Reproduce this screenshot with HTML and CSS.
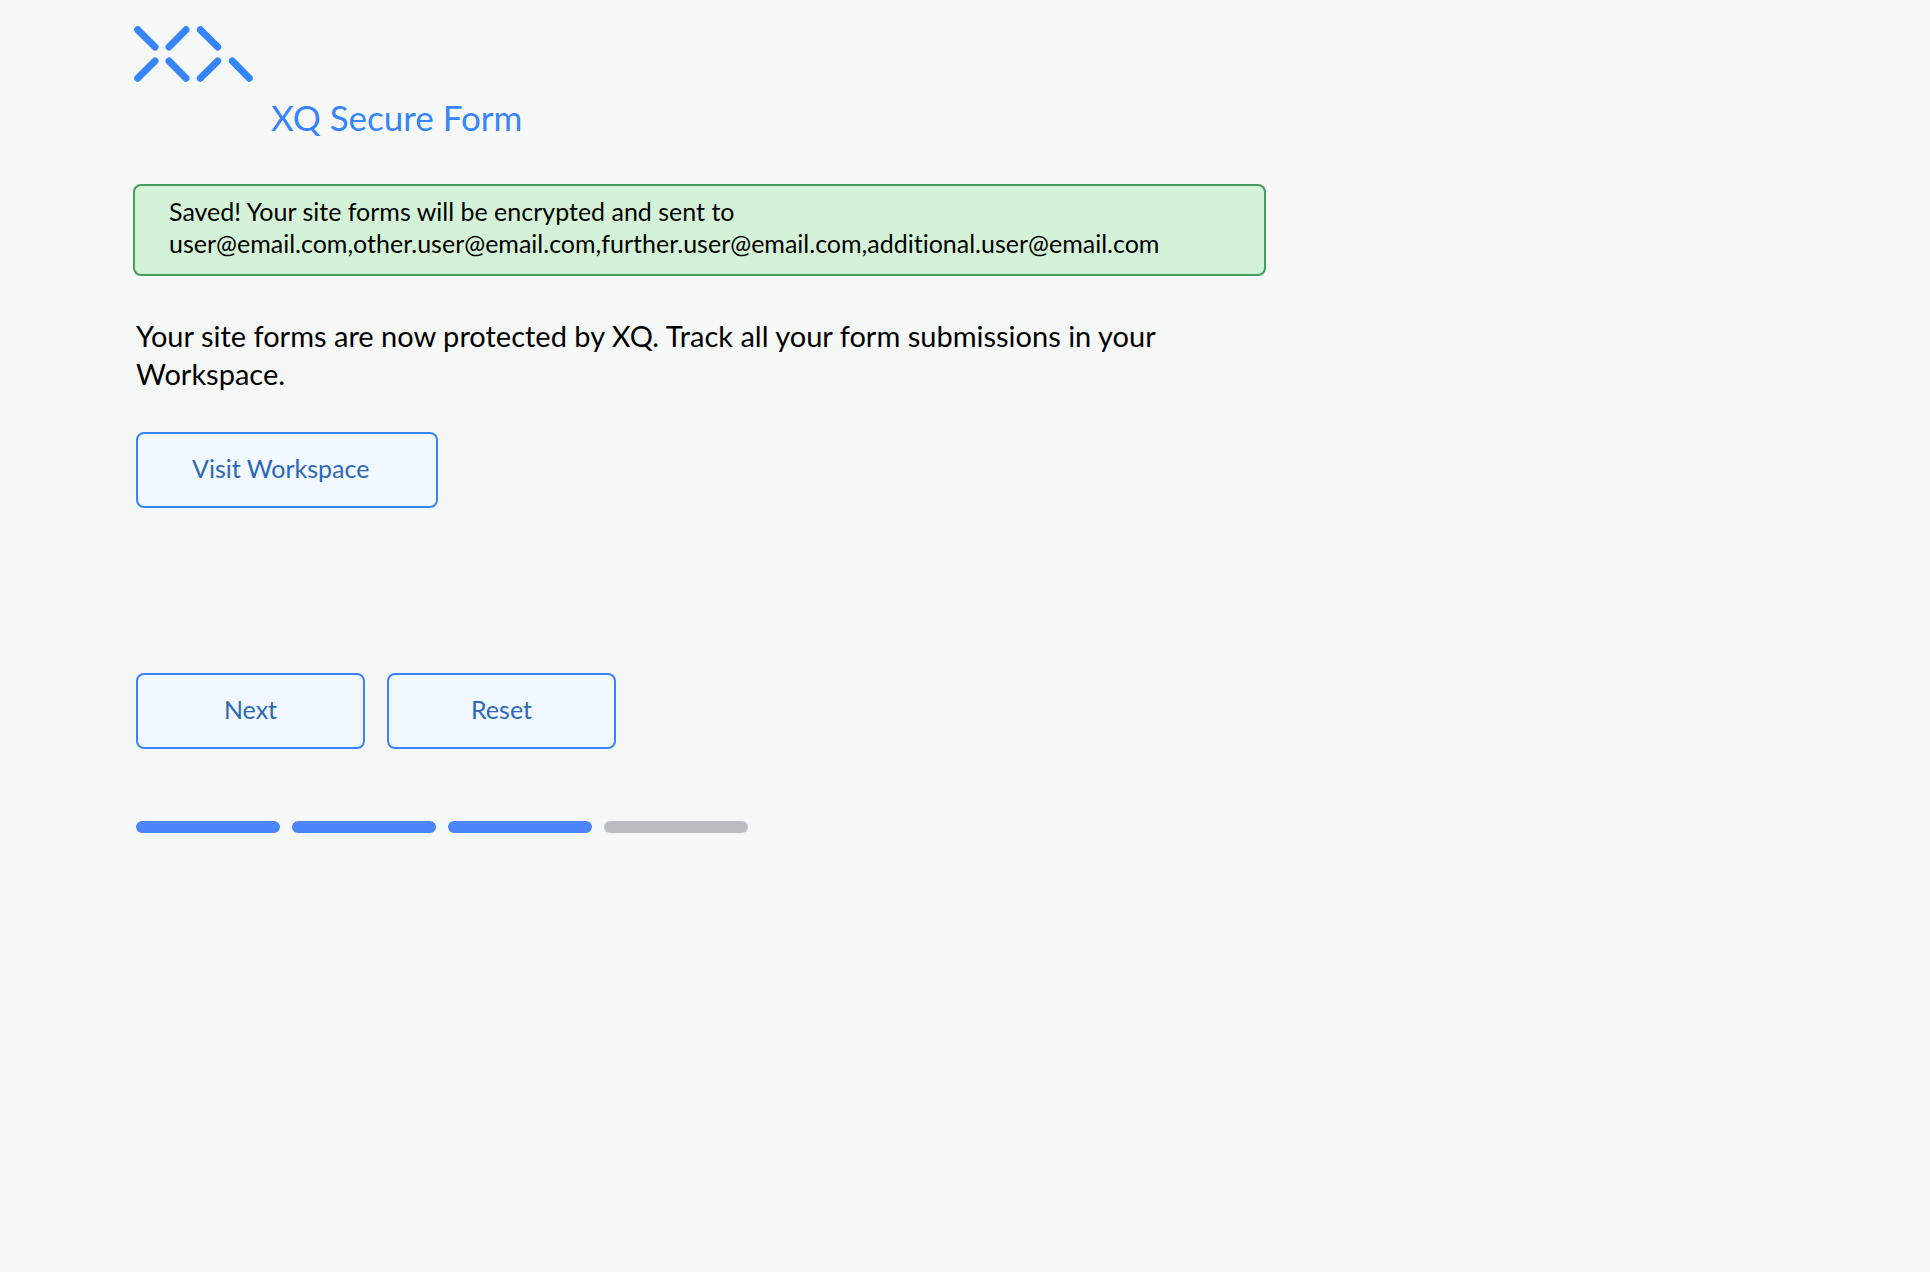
FILE: index.html
```html
<!DOCTYPE html>
<html lang="en">

<head>
    <meta charset="UTF-8">
    <meta name="viewport" content="width=device-width, initial-scale=1.0">
    <title>XQ Secure Form</title>
    <link rel="stylesheet" href="styles.css">
</head>

<body>
    <main class="page">
        <header class="header">
            <svg class="logo" width="120" height="56" viewBox="0 0 120 56" role="img" aria-label="XQ">
                <path d="M4.7 3.7L22 21M53 3.7L36 21M67.3 3.7L84.7 21M4.7 52.3L22 35M53 52.3L36 35M67.3 52.3L84.7 35M99.3 35L116.3 52.3" />
            </svg>
            <h1>XQ Secure Form</h1>
        </header>

        <div class="alert" role="status">
            Saved! Your site forms will be encrypted and sent to<br>
            user@email.com,other.user@email.com,further.user@email.com,additional.user@email.com
        </div>

        <section class="content">
            <p>Your site forms are now protected by XQ. Track all your form submissions in your Workspace.</p>
            <a class="button workspace" href="#">Visit Workspace</a>

            <div class="actions">
                <button class="button" type="button">Next</button>
                <button class="button" type="button">Reset</button>
            </div>

            <div class="steps">
                <span class="step done"></span>
                <span class="step done"></span>
                <span class="step done"></span>
                <span class="step"></span>
            </div>
        </section>
    </main>
</body>

</html>
```

FILE: styles.css
```css
* {
    box-sizing: border-box;
}

body {
    margin: 0;
    color: #000;
    background-color: #f6f8f7;
    font-family: "Avenir Next", Lato, sans-serif;
    font-size: 25px;
    line-height: 32px;
    font-variant-ligatures: none;
}

.page {
    max-width: 1286px;
    padding: 26px 20px 40px 133px;
}

.header {
    display: flex;
    align-items: flex-start;
    gap: 18px;
    margin-bottom: 47px;
}

.logo {
    flex: none;
    fill: none;
    stroke: #3685fb;
    stroke-width: 7;
    stroke-linecap: round;
}

.header h1 {
    margin: 71px 0 0;
    color: #3685fb;
    font-size: 35px;
    font-weight: 400;
    line-height: 40px;
}

.alert {
    padding: 9px 34px 15px;
    border: 2px solid #459d5b;
    border-radius: 8px;
    background-color: #d4f2d8;
    overflow-wrap: anywhere;
}

.content {
    padding: 0 3px;
}

.content p {
    max-width: 1060px;
    margin: 41px 0 39px;
    font-size: 29px;
    line-height: 38px;
}

.button {
    display: flex;
    align-items: center;
    justify-content: center;
    width: 229px;
    height: 76px;
    padding: 0 0 4px;
    border: 2px solid #3685fb;
    border-radius: 8px;
    background-color: #f1f8ff;
    color: #2c68b8;
    font: inherit;
    text-decoration: none;
    cursor: pointer;
}

.button:hover {
    background-color: #e3f0ff;
}

.workspace {
    justify-content: flex-start;
    width: 302px;
    padding-left: 54px;
    white-space: nowrap;
}

.actions {
    display: flex;
    gap: 22px;
    margin: 165px 0 72px;
}

.steps {
    display: flex;
    gap: 12px;
}

.step {
    width: 144px;
    height: 12px;
    border-radius: 6px;
    background-color: #bcbdc3;
}

.step.done {
    background-color: #4c86fa;
}
```
